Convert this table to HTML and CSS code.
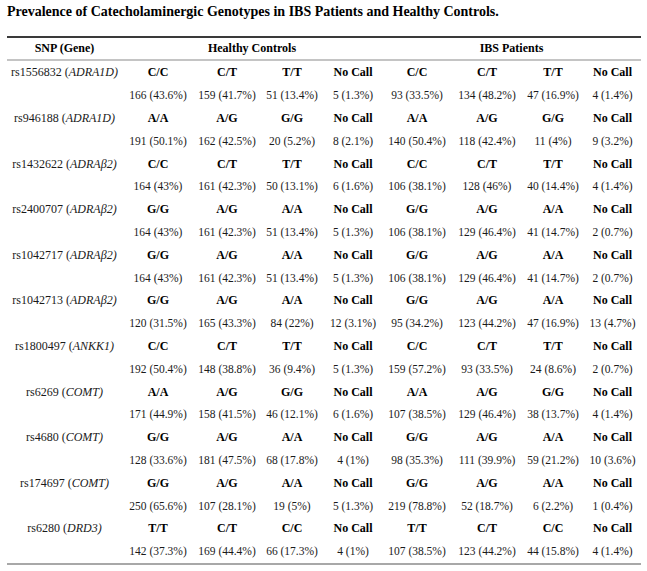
FILE: index.html
```html
<!DOCTYPE html>
<html>
<head>
<meta charset="utf-8">
<link rel="stylesheet" href="styles.css">
</head>
<body>
<div class="figure">
<h1 class="title">Prevalence of Catecholaminergic Genotypes in IBS Patients and Healthy Controls.</h1>
<table class="geno">
<colgroup>
<col class="c-snp"><col class="c-a"><col class="c-b"><col class="c-c"><col class="c-d"><col class="c-e"><col class="c-f"><col class="c-g"><col class="c-h">
</colgroup>
<thead>
<tr><th>SNP (Gene)</th><th colspan="4">Healthy Controls</th><th colspan="4">IBS Patients</th></tr>
</thead>
<tbody>
<tr class="gt"><td class="snp">rs1556832 (<i>ADRA1D)</i></td><td>C/C</td><td>C/T</td><td>T/T</td><td>No Call</td><td>C/C</td><td>C/T</td><td>T/T</td><td>No Call</td></tr>
<tr class="ct"><td></td><td>166 (43.6%)</td><td>159 (41.7%)</td><td>51 (13.4%)</td><td>5 (1.3%)</td><td>93 (33.5%)</td><td>134 (48.2%)</td><td>47 (16.9%)</td><td>4 (1.4%)</td></tr>
<tr class="gt"><td class="snp">rs946188 (<i>ADRA1D)</i></td><td>A/A</td><td>A/G</td><td>G/G</td><td>No Call</td><td>A/A</td><td>A/G</td><td>G/G</td><td>No Call</td></tr>
<tr class="ct"><td></td><td>191 (50.1%)</td><td>162 (42.5%)</td><td>20 (5.2%)</td><td>8 (2.1%)</td><td>140 (50.4%)</td><td>118 (42.4%)</td><td>11 (4%)</td><td>9 (3.2%)</td></tr>
<tr class="gt"><td class="snp">rs1432622 (<i>ADRAβ2)</i></td><td>C/C</td><td>C/T</td><td>T/T</td><td>No Call</td><td>C/C</td><td>C/T</td><td>T/T</td><td>No Call</td></tr>
<tr class="ct"><td></td><td>164 (43%)</td><td>161 (42.3%)</td><td>50 (13.1%)</td><td>6 (1.6%)</td><td>106 (38.1%)</td><td>128 (46%)</td><td>40 (14.4%)</td><td>4 (1.4%)</td></tr>
<tr class="gt"><td class="snp">rs2400707 (<i>ADRAβ2)</i></td><td>G/G</td><td>A/G</td><td>A/A</td><td>No Call</td><td>G/G</td><td>A/G</td><td>A/A</td><td>No Call</td></tr>
<tr class="ct"><td></td><td>164 (43%)</td><td>161 (42.3%)</td><td>51 (13.4%)</td><td>5 (1.3%)</td><td>106 (38.1%)</td><td>129 (46.4%)</td><td>41 (14.7%)</td><td>2 (0.7%)</td></tr>
<tr class="gt"><td class="snp">rs1042717 (<i>ADRAβ2)</i></td><td>G/G</td><td>A/G</td><td>A/A</td><td>No Call</td><td>G/G</td><td>A/G</td><td>A/A</td><td>No Call</td></tr>
<tr class="ct"><td></td><td>164 (43%)</td><td>161 (42.3%)</td><td>51 (13.4%)</td><td>5 (1.3%)</td><td>106 (38.1%)</td><td>129 (46.4%)</td><td>41 (14.7%)</td><td>2 (0.7%)</td></tr>
<tr class="gt"><td class="snp">rs1042713 (<i>ADRAβ2)</i></td><td>G/G</td><td>A/G</td><td>A/A</td><td>No Call</td><td>G/G</td><td>A/G</td><td>A/A</td><td>No Call</td></tr>
<tr class="ct"><td></td><td>120 (31.5%)</td><td>165 (43.3%)</td><td>84 (22%)</td><td>12 (3.1%)</td><td>95 (34.2%)</td><td>123 (44.2%)</td><td>47 (16.9%)</td><td>13 (4.7%)</td></tr>
<tr class="gt"><td class="snp">rs1800497 (<i>ANKK1)</i></td><td>C/C</td><td>C/T</td><td>T/T</td><td>No Call</td><td>C/C</td><td>C/T</td><td>T/T</td><td>No Call</td></tr>
<tr class="ct"><td></td><td>192 (50.4%)</td><td>148 (38.8%)</td><td>36 (9.4%)</td><td>5 (1.3%)</td><td>159 (57.2%)</td><td>93 (33.5%)</td><td>24 (8.6%)</td><td>2 (0.7%)</td></tr>
<tr class="gt"><td class="snp">rs6269 (<i>COMT)</i></td><td>A/A</td><td>A/G</td><td>G/G</td><td>No Call</td><td>A/A</td><td>A/G</td><td>G/G</td><td>No Call</td></tr>
<tr class="ct"><td></td><td>171 (44.9%)</td><td>158 (41.5%)</td><td>46 (12.1%)</td><td>6 (1.6%)</td><td>107 (38.5%)</td><td>129 (46.4%)</td><td>38 (13.7%)</td><td>4 (1.4%)</td></tr>
<tr class="gt"><td class="snp">rs4680 (<i>COMT)</i></td><td>G/G</td><td>A/G</td><td>A/A</td><td>No Call</td><td>G/G</td><td>A/G</td><td>A/A</td><td>No Call</td></tr>
<tr class="ct"><td></td><td>128 (33.6%)</td><td>181 (47.5%)</td><td>68 (17.8%)</td><td>4 (1%)</td><td>98 (35.3%)</td><td>111 (39.9%)</td><td>59 (21.2%)</td><td>10 (3.6%)</td></tr>
<tr class="gt"><td class="snp">rs174697 (<i>COMT)</i></td><td>G/G</td><td>A/G</td><td>A/A</td><td>No Call</td><td>G/G</td><td>A/G</td><td>A/A</td><td>No Call</td></tr>
<tr class="ct"><td></td><td>250 (65.6%)</td><td>107 (28.1%)</td><td>19 (5%)</td><td>5 (1.3%)</td><td>219 (78.8%)</td><td>52 (18.7%)</td><td>6 (2.2%)</td><td>1 (0.4%)</td></tr>
<tr class="gt"><td class="snp">rs6280 (<i>DRD3)</i></td><td>T/T</td><td>C/T</td><td>C/C</td><td>No Call</td><td>T/T</td><td>C/T</td><td>C/C</td><td>No Call</td></tr>
<tr class="ct"><td></td><td>142 (37.3%)</td><td>169 (44.4%)</td><td>66 (17.3%)</td><td>4 (1%)</td><td>107 (38.5%)</td><td>123 (44.2%)</td><td>44 (15.8%)</td><td>4 (1.4%)</td></tr>
</tbody>
</table>
</div>
</body>
</html>
```

FILE: styles.css
```css
html, body {
  margin: 0;
  padding: 0;
  background: #ffffff;
}
body {
  font-family: "Liberation Serif", "Times New Roman", serif;
  color: #1a1a1a;
}
.figure {
  padding: 4px 0 0 7px;
}
.title {
  margin: 0 0 16px 0;
  font-size: 14px;
  line-height: 16px;
  font-weight: bold;
  color: #000;
}
.geno {
  border-collapse: separate;
  border-spacing: 0;
  table-layout: fixed;
  width: 634px;
  border-top: 2px solid #3a3a3a;
  border-bottom: 2px solid #a8a8a8;
  font-size: 11.5px;
}
.c-snp { width: 115px; }
.c-a { width: 72px; }
.c-b { width: 66px; }
.c-c { width: 64px; }
.c-d { width: 58px; }
.c-e { width: 70px; }
.c-f { width: 70px; }
.c-g { width: 62px; }
.c-h { width: 57px; }
.geno th {
  height: 21px;
  padding: 0;
  font-size: 12px;
  font-weight: bold;
  color: #000;
  text-align: center;
  border-bottom: 2px solid #c4c4c4;
  white-space: nowrap;
}
.geno td {
  height: 22.8px;
  padding: 0;
  text-align: center;
  white-space: nowrap;
  line-height: 14px;
}
.gt td {
  font-size: 12px;
  font-weight: bold;
  color: #000;
}
.gt td.snp {
  font-weight: normal;
  color: #1a1a1a;
}
```
